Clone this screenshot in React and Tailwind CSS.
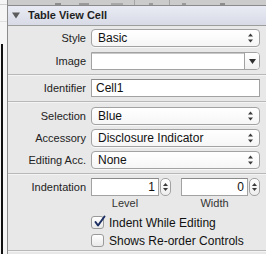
import React from 'react';

function UpDown() {
  return (
    <svg width="7" height="10" viewBox="0 0 7 10" className="shrink-0">
      <path d="M3.5 0.5 L6 3.5 L1 3.5 Z" fill="#3a3a3a" />
      <path d="M3.5 9.5 L6 6.5 L1 6.5 Z" fill="#3a3a3a" />
    </svg>
  );
}

function Select({ value }) {
  return (
    <div className="flex h-[18px] flex-1 items-center rounded-[4px] border border-[#a2a2a2] bg-gradient-to-b from-white to-[#f6f6f6] pl-[6px] pr-[5px] shadow-[0_1px_0_rgba(255,255,255,0.7)]">
      <span className="flex-1 text-[12px] leading-none text-[#111]">{value}</span>
      <UpDown />
    </div>
  );
}

function Row({ label, children }) {
  return (
    <div className="flex items-center gap-[5px]">
      <div className="w-[78px] shrink-0 text-right text-[11px] leading-none text-[#222]">{label}</div>
      <div className="flex flex-1">{children}</div>
    </div>
  );
}

function Separator() {
  return <div className="h-[2px] border-t border-[#b8b8b8] bg-[#f4f4f4]" />;
}

function Stepper() {
  return (
    <div className="flex h-[18px] w-[11px] shrink-0 flex-col items-center justify-center gap-[2px] rounded-[5px] border border-[#a2a2a2] bg-gradient-to-b from-white to-[#ededed]">
      <svg width="5" height="3" viewBox="0 0 5 3">
        <path d="M2.5 0 L5 3 L0 3 Z" fill="#3a3a3a" />
      </svg>
      <svg width="5" height="3" viewBox="0 0 5 3">
        <path d="M2.5 3 L5 0 L0 0 Z" fill="#3a3a3a" />
      </svg>
    </div>
  );
}

function Checkbox({ checked, label }) {
  return (
    <div className="flex items-center gap-[5px]">
      <div className="relative flex h-[13px] w-[13px] items-center justify-center rounded-[3px] border border-[#9a9a9a] bg-gradient-to-b from-white to-[#e9e9e9]">
        {checked && (
          <svg width="13" height="13" viewBox="0 0 13 13" className="absolute -top-[2px] left-[1px]">
            <path d="M2.5 7 L5 10.5 L11.5 1.5" fill="none" stroke="#1c2f63" strokeWidth="2" strokeLinecap="round" strokeLinejoin="round" />
          </svg>
        )}
      </div>
      <span className="text-[12px] leading-none text-[#111]">{label}</span>
    </div>
  );
}

export default function App() {
  return (
    <div className="flex h-[254px] w-[266px] overflow-hidden bg-[#e8e8e8] font-['Liberation_Sans',Arial,sans-serif]">
      {/* left strip */}
      <div className="flex w-[8px] shrink-0 flex-col border-r border-[#8c8c8c] bg-[#f5f5f5]">
        <div className="h-[5px] border-b border-[#cfcfcf]" />
        <div className="h-[17px] border-b border-[#e0e0e0]" />
        <div className="h-[22px]" />
        <div className="flex flex-1">
          <div className="ml-[1px] w-[2px] bg-[#111]" />
        </div>
      </div>

      {/* inspector panel */}
      <div className="flex flex-1 flex-col">
        <div className="flex h-[6px] items-end border-b border-[#8a8a8a] bg-[#cbcbcb]">
          <div className="ml-[47px] h-[2px] w-[6px] bg-[#8d8d8d]" />
          <div className="ml-[18px] h-[2px] w-[10px] bg-[#9a9a9a]" />
          <div className="ml-[22px] h-[2px] w-[12px] bg-[#a8a8a8]" />
          <div className="ml-[11px] h-[5px] w-px bg-[#a5a5a5]" />
          <div className="ml-[14px] h-[2px] w-[4px] bg-[#9a9a9a]" />
          <div className="ml-[16px] h-[5px] w-px bg-[#a5a5a5]" />
          <div className="ml-[12px] h-[2px] w-[4px] bg-[#9a9a9a]" />
          <div className="ml-[34px] h-[2px] w-[5px] bg-[#8d8d8d]" />
        </div>

        <div className="flex h-[20px] items-center border-b border-[#9d9d9d] bg-gradient-to-b from-[#e9ebf4] to-[#d8dbe6] pl-[4px]">
          <svg width="8" height="7" viewBox="0 0 8 7">
            <path d="M0 0.5 L8 0.5 L4 6.5 Z" fill="#5c5c5c" />
          </svg>
          <span className="ml-[8px] text-[11px] font-bold leading-none text-[#1e1e1e]">Table View Cell</span>
        </div>

        <div className="flex flex-col pr-[8px] pt-[3px]">
          <Row label="Style">
            <Select value="Basic" />
          </Row>
          <div className="mt-[5px]">
            <Row label="Image">
              <div className="flex h-[18px] flex-1 items-stretch rounded-r-[4px] border border-[#a2a2a2] bg-white">
                <div className="flex-1 border-t border-[#c8c8c8]" />
                <div className="flex w-[15px] items-center justify-center rounded-r-[3px] border-l border-[#a2a2a2] bg-gradient-to-b from-white to-[#f1f1f1]">
                  <svg width="7" height="5" viewBox="0 0 7 5">
                    <path d="M0 0 L7 0 L3.5 5 Z" fill="#2f2f2f" />
                  </svg>
                </div>
              </div>
            </Row>
          </div>
          <div className="mt-[4px] -mr-[8px]">
            <Separator />
          </div>

          <div className="mt-[3px]">
            <Row label="Identifier">
              <div className="flex h-[18px] flex-1 items-center border border-[#a2a2a2] border-t-[#8a8a8a] bg-white pl-[4px]">
                <span className="text-[12px] leading-none text-[#111]">Cell1</span>
              </div>
            </Row>
          </div>
          <div className="mt-[4px] -mr-[8px]">
            <Separator />
          </div>

          <div className="mt-[4px] flex flex-col gap-[4px]">
            <Row label="Selection">
              <Select value="Blue" />
            </Row>
            <Row label="Accessory">
              <Select value="Disclosure Indicator" />
            </Row>
            <Row label="Editing Acc.">
              <Select value="None" />
            </Row>
          </div>
          <div className="mt-[4px] -mr-[8px]">
            <Separator />
          </div>

          <div className="mt-[3px]">
            <Row label="Indentation">
              <div className="flex flex-1 items-center">
                <div className="flex h-[18px] w-[68px] items-center justify-end border border-[#a2a2a2] border-t-[#8a8a8a] bg-white pr-[3px]">
                  <span className="text-[12px] leading-none text-[#111]">1</span>
                </div>
                <div className="ml-[1px]">
                  <Stepper />
                </div>
                <div className="ml-[10px] flex h-[18px] w-[67px] items-center justify-end border border-[#a2a2a2] border-t-[#8a8a8a] bg-white pr-[3px]">
                  <span className="text-[12px] leading-none text-[#111]">0</span>
                </div>
                <div className="ml-[1px]">
                  <Stepper />
                </div>
              </div>
            </Row>
          </div>
          <div className="mt-[2px] flex pl-[83px] text-[11px] leading-none text-[#333]">
            <div className="w-[68px] text-center">Level</div>
            <div className="ml-[22px] w-[67px] text-center">Width</div>
          </div>

          <div className="mt-[7px] flex flex-col gap-[5px] pl-[83px]">
            <Checkbox checked label="Indent While Editing" />
            <Checkbox label="Shows Re-order Controls" />
          </div>
          <div className="mt-[3px] -mr-[8px]">
            <Separator />
          </div>
        </div>
      </div>
    </div>
  );
}
